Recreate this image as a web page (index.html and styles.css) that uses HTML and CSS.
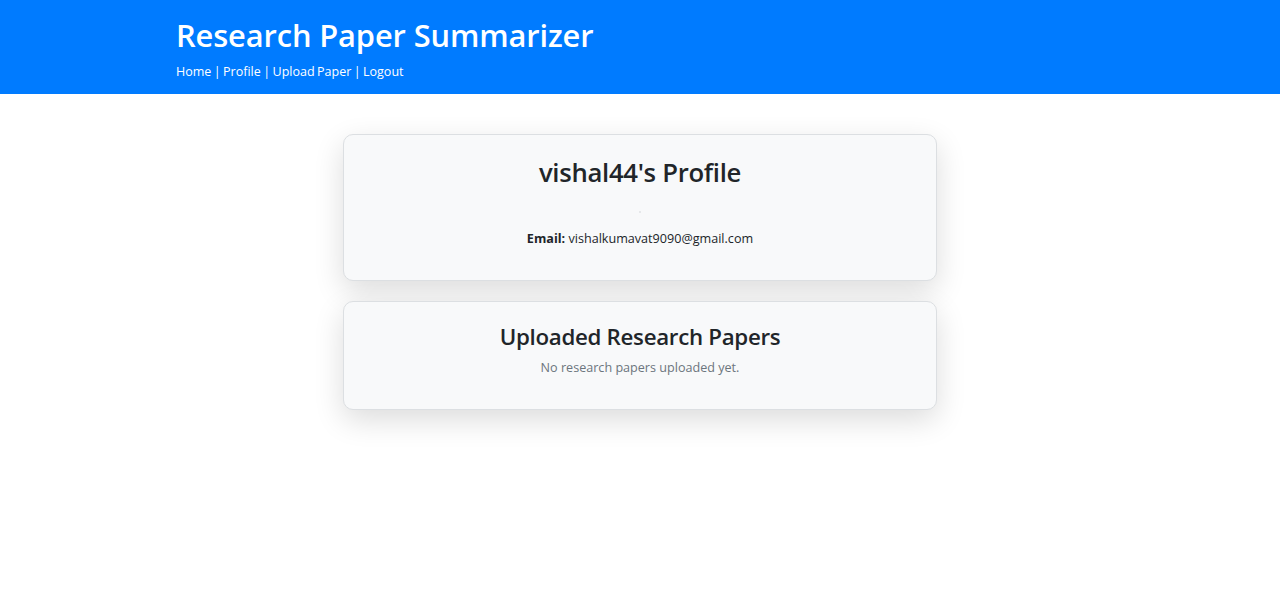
FILE: index.html
```html
<!DOCTYPE html>
<html lang="en">
<head>
<meta charset="utf-8">
<title>Profile - Research Paper Summarizer</title>
<link rel="stylesheet" href="styles.css">
</head>
<body>
<header class="site-header">
  <div class="header-inner">
    <h1 class="site-title">Research Paper Summarizer</h1>
    <nav class="site-nav">
      <a href="#">Home</a> | <a href="#">Profile</a> | <a href="#">Upload Paper</a> | <a href="#">Logout</a>
    </nav>
  </div>
</header>
<main class="content">
  <section class="card profile-card">
    <h2 class="card-title">vishal44's Profile</h2>
    <div class="avatar"></div>
    <p class="email"><strong>Email:</strong> vishalkumavat9090@gmail.com</p>
  </section>
  <section class="card papers-card">
    <h3 class="papers-title">Uploaded Research Papers</h3>
    <p class="muted">No research papers uploaded yet.</p>
  </section>
</main>
</body>
</html>
```
FILE: styles.css
```css
* { box-sizing: border-box; }
html, body { margin: 0; padding: 0; }
body {
  font-family: "Open Sans", "Noto Sans", sans-serif;
  color: #212529;
  background: #fff;
  min-height: 608px;
}
.site-header {
  background: #007bff;
  color: #fff;
  padding: 15px 0 12px;
}
.header-inner {
  width: 960px;
  margin: 0 auto;
  padding: 0 16px;
}
.site-title {
  margin: 0;
  font-size: 30.8px;
  line-height: 40px;
  font-weight: 600;
  letter-spacing: -0.1px;
}
.site-nav {
  margin-top: 7px;
  font-size: 12.5px;
  line-height: 20px;
  word-spacing: -0.8px;
}
.site-nav a { color: #fff; text-decoration: none; }
.content {
  width: 594px;
  margin: 40px auto 0;
  padding-bottom: 40px;
  display: flex;
  flex-direction: column;
  gap: 20px;
}
.card {
  background: #f8f9fa;
  border: 1px solid #dcdfe2;
  border-radius: 10px;
  box-shadow: 0 10px 30px rgba(0, 0, 0, 0.14);
  padding: 20px;
  text-align: center;
}
.card-title {
  margin: 0;
  font-size: 25.7px;
  line-height: 36px;
  font-weight: 600;
  letter-spacing: -0.3px;
}
.avatar {
  width: 2px;
  height: 2px;
  margin: 20px auto 15px;
  background: #e6e8ea;
}
.email {
  margin: 0 0 11px;
  font-size: 12.6px;
  line-height: 21px;
}
.email strong { font-weight: 700; }
.papers-title {
  margin: 0;
  font-size: 22.3px;
  line-height: 30px;
  font-weight: 600;
  letter-spacing: -0.3px;
}
.muted {
  margin: 6px 0 11px;
  font-size: 12.6px;
  line-height: 20px;
  color: #6c757d;
}
```
